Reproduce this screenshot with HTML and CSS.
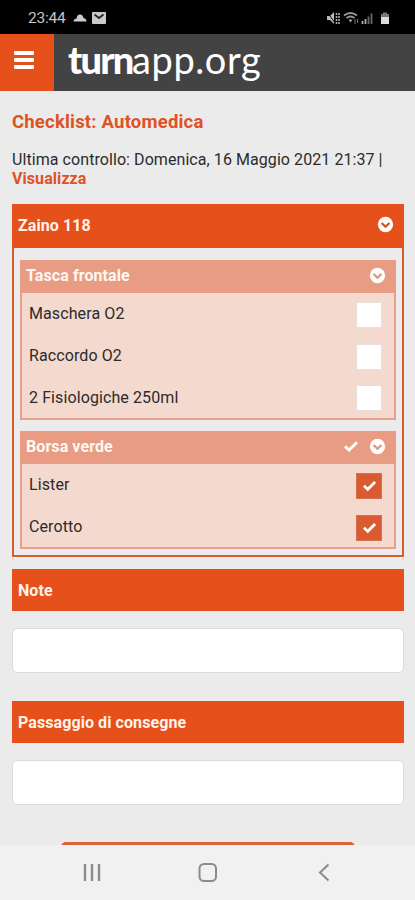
FILE: index.html
```html
<!DOCTYPE html>
<html lang="it">
<head>
<meta charset="utf-8">
<meta name="viewport" content="width=device-width">
<title>turnapp.org</title>
<link rel="stylesheet" href="styles.css">
</head>
<body>
<svg class="defs" width="0" height="0">
  <symbol id="chevron" viewBox="0 0 16 16"><circle cx="8" cy="8" r="7.2" fill="#fff"/><path d="M4.3 6.6 8 10.1l3.7-3.5" fill="none" stroke="currentColor" stroke-width="2.2"/></symbol>
  <symbol id="check" viewBox="0 0 16 14"><path d="M2 7.3 6.1 11 14 3.2" fill="none" stroke="#fff" stroke-width="3"/></symbol>
</svg>
<div class="phone">
  <div class="status">
    <span class="clock">23:44</span>
    <svg class="cloud" width="14" height="10" viewBox="0 0 14 10"><path d="M.5 8.500Q.5 6 3.500 5.500 4 1.500 7 1.500T10.500 5Q13.500 5.500 13.500 8.500Z" fill="#ccc"/></svg>
    <svg class="mail" width="14" height="12" viewBox="0 0 14 12"><rect width="14" height="12" rx="1" fill="#c9c9c9"/><path d="M2.500 2.500 7 6l4.500-3.500" fill="none" stroke="#222" stroke-width="1.800"/></svg>
    <svg class="signals" width="66" height="16" viewBox="0 0 66 16">
      <path d="M1 6h3l4-4v12l-4-4H1Z" fill="#bbb"/><path d="M1.500 2.500 9 13" stroke="#000"/><path d="M10.500 3v11M13 3v11" stroke="#aaa" stroke-width="1.600" stroke-dasharray="2 1"/>
      <path d="M18 5.500q6.500-5 13 0M20.500 8q4-3 8 0" fill="none" stroke="#999" stroke-width="1.800"/><path d="M22.500 9.500h4l-2 3Z" fill="#aaa"/><path d="M29 9v5M31.500 9v4" stroke="#777"/>
      <path d="M36.500 11v3M39.500 9v5" stroke="#aaa" stroke-width="1.800"/><path d="M42.500 6.500V14M45.500 3.500V14" stroke="#666" stroke-width="1.800"/>
      <path d="M57 2.500h4V4h2v10h-8V4h2Z" fill="#777"/><path d="M55 7h8v7h-8Z" fill="#ddd"/>
    </svg>
  </div>
  <header class="topbar">
    <div class="menu"><i></i><i></i><i></i></div>
    <div class="logo"><b>turn</b><span>app.org</span></div>
  </header>
  <main>
    <h1>Checklist: Automedica</h1>
    <p>Ultima controllo: Domenica, 16 Maggio 2021 21:37 |<br><a>Visualizza</a></p>
    <section class="panel">
      <div class="bar"><span>Zaino 118</span><svg class="chev"><use href="#chevron"/></svg></div>
      <div class="groups">
        <div class="group">
          <div class="group-head"><span>Tasca frontale</span><svg class="chev"><use href="#chevron"/></svg></div>
          <div class="row"><span>Maschera O2</span><i class="box"></i></div>
          <div class="row"><span>Raccordo O2</span><i class="box"></i></div>
          <div class="row"><span>2 Fisiologiche 250ml</span><i class="box"></i></div>
        </div>
        <div class="group second">
          <div class="group-head"><span>Borsa verde</span><svg class="done"><use href="#check"/></svg><svg class="chev"><use href="#chevron"/></svg></div>
          <div class="row"><span>Lister</span><i class="box on"><svg><use href="#check"/></svg></i></div>
          <div class="row"><span>Cerotto</span><i class="box on"><svg><use href="#check"/></svg></i></div>
        </div>
      </div>
    </section>
    <div class="bar note"><span>Note</span></div>
    <div class="input"></div>
    <div class="bar handover"><span>Passaggio di consegne</span></div>
    <div class="input"></div>
    <div class="button"></div>
  </main>
  <nav>
    <svg width="415" height="55" viewBox="0 1 415 55" fill="none" stroke="#8b8b8b" stroke-width="2"><path d="M85 20v17M92 20v17M99 20v17" stroke-width="2.400"/><rect x="199.500" y="20" width="16.500" height="17" rx="4.500"/><path d="m328.500 20.500-8.500 8 8.500 8"/></svg>
  </nav>
</div>
</body>
</html>
```

FILE: styles.css
```css
* { box-sizing: border-box; }
body { margin: 0; font-family: Roboto, sans-serif; font-size: 16px; color: #2b2b2b; }
svg { display: block; flex: none; }
.defs { height: 0; }
.phone { width: 415px; height: 900px; overflow: hidden; background: #ebebeb; display: flex; flex-direction: column; }
.status { height: 34px; flex: none; background: #000; color: #c4c4c4; display: flex; align-items: center; padding: 1px 23px 0 28px; }
.clock { font-size: 15.500px; letter-spacing: -.2px; width: 45px; }
.mail { margin-left: 5px; }
.signals { margin-left: auto; }
.topbar { height: 57px; flex: none; background: #434343; display: flex; }
.menu { width: 54px; background: #e6511b; display: flex; flex-direction: column; gap: 3px; padding: 17px 0 0 14px; }
.menu i { width: 20px; height: 4px; border-radius: 1px; background: #fff; }
.logo { color: #fff; font-family: Lato, sans-serif; font-size: 38px; line-height: 50px; padding-left: 14px; white-space: nowrap; display: flex; }
.logo b { font-weight: 900; letter-spacing: -1.800px; width: 64px; }
.logo span { letter-spacing: .6px; }
main { height: 754px; flex: none; padding: 0 11px 0 12px; overflow: hidden; display: flex; flex-direction: column; }
h1 { margin: 19px 0 0; font-size: 18.500px; line-height: 24px; font-weight: 700; letter-spacing: .2px; color: #df5226; }
p { margin: 16px 0 0; line-height: 19px; white-space: nowrap; letter-spacing: .07px; }
p a { color: #df5226; font-weight: 700; }
.panel { margin-top: 16px; border: 2px solid #d95a2b; border-top: 0; flex: none; height: 353px; }
.bar { height: 43px; flex: none; background: #e6511b; color: #fff4ec; font-weight: 700; letter-spacing: .08px; display: flex; align-items: center; padding: 0 6px; }
.panel .bar { margin: 0 -2px; height: 44px; padding: 0 10px 2px 6px; }
.chev { width: 17px; height: 17px; margin-left: auto; color: #d3511f; }
.bar .chev { margin-bottom: 2px; }
.groups { padding: 12px 6px 0; }
.group { height: 160px; border: 2px solid #e9a08a; border-top: 0; background: #f4d9ce; }
.group-head { margin: 0 -2px; height: 33px; background: #e79c83; color: #fff8f2; font-weight: 700; letter-spacing: .08px; display: flex; align-items: center; padding: 0 10px 3px 6px; }
.group-head .chev { color: #e0957b; }
.second { height: 118px; margin-top: 11px; }
.done { width: 16px; height: 14px; margin-left: auto; }
.done + .chev { margin-left: 10px; }
.row { height: 41.700px; display: flex; align-items: center; justify-content: space-between; padding: 0 12px 0 7px; letter-spacing: .1px; }
.row .box { margin-top: 2px; }
.box { width: 26px; height: 26px; background: #fff; border: 1px solid #e9dfda; }
.on { background: #d95b32; border-color: #d9704b; display: flex; align-items: center; justify-content: center; }
.on svg { width: 15px; height: 13px; }
.note { margin-top: 12px; height: 42px; }
.input { height: 45px; flex: none; background: #fff; border: 1px solid #dadada; border-radius: 5px; margin-top: 17px; }
.handover { margin-top: 28px; height: 42px; }
.button { height: 40px; flex: none; margin: 37px 49px 0; background: #d8623c; border-radius: 5px; }
nav { height: 55px; flex: none; background: #f1f1f1; }
```
